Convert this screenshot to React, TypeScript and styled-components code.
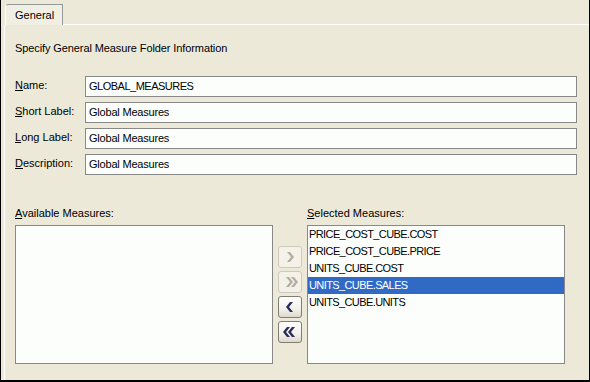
import React, {FC} from 'react';
import styled, {createGlobalStyle} from "styled-components";

const GlobalStyle = createGlobalStyle`
  html, body {
    margin: 0;
    padding: 0;
    background: #ECE9D8;
  }
  * {
    box-sizing: border-box;
  }
`

const Window = styled.div`
  width: 590px;
  height: 382px;
  display: flex;
  flex-direction: column;
  padding: 4px 0 0 3px;
  background: #ECE9D8;
  border-left: 1px solid #000;
  border-right: 1px solid #000;
  border-bottom: 2px solid #000;
  font-family: "Liberation Sans", Arial, sans-serif;
  font-size: 11px;
  color: #000;
  overflow: hidden;
`
const TabStrip = styled.div`
  display: flex;
  height: 21px;
`
const Tab = styled.div`
  width: 58px;
  margin-left: 1px;
  padding: 4px 0 0 9px;
  border: 1px solid #919B9C;
  border-left-color: #FFFFFF;
  border-bottom: none;
  border-top-left-radius: 4px;
  background: #F1EFE4;
`
const TabFiller = styled.div`
  flex: 1;
  border-bottom: 1px solid #FFFFFF;
`
const Panel = styled.div`
  flex: 1;
  padding: 17px 0 0 10px;
  border-left: 1px solid #FFFFFF;
`
const Intro = styled.div`
  height: 13px;
  line-height: 13px;
  letter-spacing: -0.1px;
`
const Form = styled.div`
  display: grid;
  grid-template-columns: 70px 492px;
  grid-auto-rows: 21px;
  row-gap: 5px;
  margin-top: 21px;
`
const Label = styled.label`
  line-height: 13px;
  padding-top: 3px;

  u {
    text-decoration: underline;
  }
`
const Field = styled.div<{$caps?: boolean}>`
  border: 1px solid #888888;
  background: #FCFEFB;
  padding: 0 0 0 3px;
  line-height: 19px;
  white-space: nowrap;
  letter-spacing: ${p => p.$caps ? '-0.5px' : '-0.2px'};
`
const Shuttle = styled.div`
  display: grid;
  grid-template-columns: 258px 34px 258px;
  grid-template-rows: 13px 139px;
  row-gap: 5px;
  margin-top: 32px;
`
const ListLabel = styled.div<{$col: number}>`
  grid-column: ${p => p.$col};
  line-height: 13px;
`
const ListBox = styled.div`
  border: 1px solid #888888;
  background: #FCFEFB;
  display: flex;
  flex-direction: column;
`
const Item = styled.div<{$selected?: boolean}>`
  height: 17px;
  line-height: 17px;
  padding-left: 1px;
  white-space: nowrap;
  letter-spacing: -0.6px;
  background: ${p => p.$selected ? '#316AC5' : 'transparent'};
  color: ${p => p.$selected ? '#FFFFFF' : '#000000'};
`
const Buttons = styled.div`
  display: flex;
  flex-direction: column;
  align-items: center;
  justify-content: center;
  gap: 3px;
`
const MoveButton = styled.button<{$enabled?: boolean}>`
  width: 24px;
  height: 22px;
  padding: 0;
  display: flex;
  align-items: center;
  justify-content: center;
  border-radius: 3px;
  border: 1px solid ${p => p.$enabled ? '#7F7D74' : '#CDCABC'};
  background: ${p => p.$enabled
    ? 'linear-gradient(#FFFFFF, #F2F1EA 60%, #DCD9CB)'
    : '#F3F1E8'};

  svg {
    display: block;
  }
`

const Chevron: FC<{double?: boolean, left?: boolean, enabled?: boolean}> = ({double, left, enabled}) => {
  const fill = enabled ? '#2B2B5C' : '#B2AFA2';
  const one = (dx: number) => `${4 + dx},2 ${7 + dx},2 ${11 + dx},7 ${7 + dx},12 ${4 + dx},12 ${8 + dx},7`;
  const w = double ? 17 : 14;
  return (
    <svg width={w} height="14" viewBox={`0 0 ${w} 14`}
         style={left ? {transform: 'scaleX(-1)'} : undefined}>
      <polygon points={one(0)} fill={fill}/>
      {double && <polygon points={one(5)} fill={fill}/>}
    </svg>
  );
};

const Mn: FC<{k: string, rest: string}> = ({k, rest}) => (
  <><u>{k}</u>{rest}</>
);

const fields = [
  {k: 'N', rest: 'ame:', value: 'GLOBAL_MEASURES', caps: true},
  {k: 'S', rest: 'hort Label:', value: 'Global Measures'},
  {k: 'L', rest: 'ong Label:', value: 'Global Measures'},
  {k: 'D', rest: 'escription:', value: 'Global Measures'},
];

const selected = [
  'PRICE_COST_CUBE.COST',
  'PRICE_COST_CUBE.PRICE',
  'UNITS_CUBE.COST',
  'UNITS_CUBE.SALES',
  'UNITS_CUBE.UNITS',
];

export default function App() {
  return (
    <>
      <GlobalStyle/>
      <Window>
        <TabStrip>
          <Tab>General</Tab>
          <TabFiller/>
        </TabStrip>
        <Panel>
          <Intro>Specify General Measure Folder Information</Intro>
          <Form>
            {fields.map(f => (
              <React.Fragment key={f.k}>
                <Label><Mn k={f.k} rest={f.rest}/></Label>
                <Field $caps={f.caps}>{f.value}</Field>
              </React.Fragment>
            ))}
          </Form>
          <Shuttle>
            <ListLabel $col={1}><Mn k="A" rest="vailable Measures:"/></ListLabel>
            <ListLabel $col={3}><Mn k="S" rest="elected Measures:"/></ListLabel>
            <ListBox/>
            <Buttons>
              <MoveButton><Chevron/></MoveButton>
              <MoveButton><Chevron double/></MoveButton>
              <MoveButton $enabled><Chevron left enabled/></MoveButton>
              <MoveButton $enabled><Chevron left double enabled/></MoveButton>
            </Buttons>
            <ListBox>
              {selected.map(s => (
                <Item key={s} $selected={s === 'UNITS_CUBE.SALES'}>{s}</Item>
              ))}
            </ListBox>
          </Shuttle>
        </Panel>
      </Window>
    </>
  );
}
